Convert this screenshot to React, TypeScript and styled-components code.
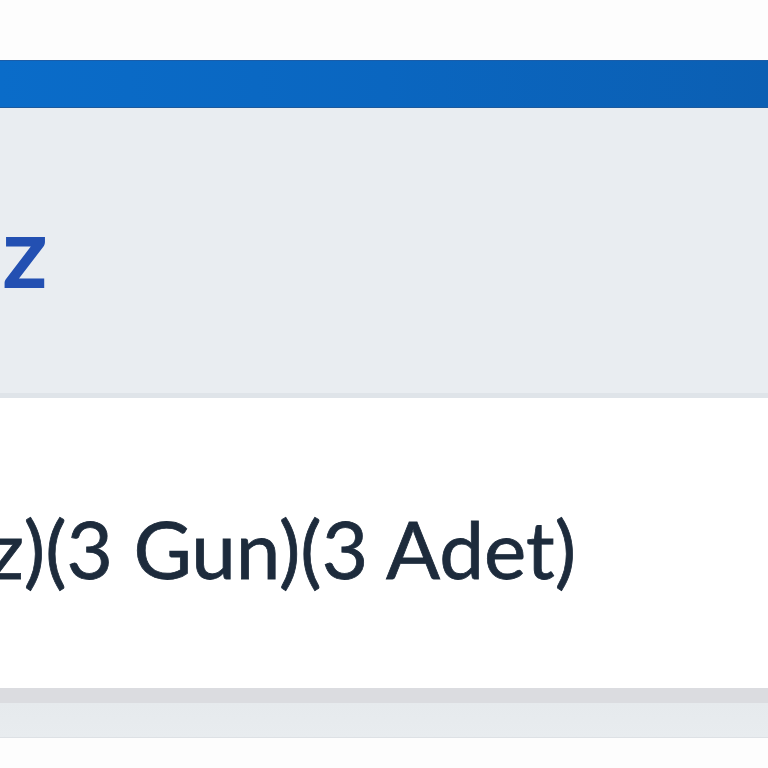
import React from "react";
import styled, { createGlobalStyle } from "styled-components";

const Global = createGlobalStyle`
  html, body { margin: 0; padding: 0; background: #fdfdfd; overflow: hidden; }
  #root { width: 768px; height: 768px; }
`;

const Page = styled.div`
  width: 768px;
  height: 768px;
  display: flex;
  flex-direction: column;
  font-family: Lato, "Open Sans", sans-serif;
  overflow: hidden;
`;

const TopSpace = styled.div`
  height: 60px;
  background: #fdfdfd;
`;

const BlueBar = styled.div`
  height: 48px;
  background: linear-gradient(90deg, #0a6cc9 0%, #0a66c0 50%, #0b5fb3 100%);
  border-top: 1px solid #1b5da8;
  border-bottom: 1px solid #1b5a9e;
  box-sizing: border-box;
`;

const HeadBand = styled.div`
  height: 290px;
  background: #e9edf1;
  border-bottom: 5px solid #dfe4e9;
  box-sizing: border-box;
  display: flex;
  align-items: center;
`;

const EndAnchor = styled.div<{ $w: number }>`
  width: ${(p) => p.$w}px;
  flex: none;
  display: flex;
  justify-content: flex-end;
`;

const Heading = styled.h1`
  margin: 0;
  white-space: nowrap;
  font-size: 100px;
  font-weight: 700;
  color: #2350b2;
  line-height: 1;
  transform: translateY(-2px);
`;

const Body = styled.div`
  height: 290px;
  background: #ffffff;
  display: flex;
  align-items: center;
`;

const Line = styled.p`
  margin: 0;
  white-space: nowrap;
  font-size: 80px;
  font-weight: 400;
  color: #1d2b3c;
  line-height: 1;
  transform: translateY(5px);
  -webkit-text-stroke: 0.8px #1d2b3c;
`;

const Footer = styled.div`
  height: 50px;
  background: linear-gradient(180deg, #dbdce0 0%, #dbdce0 30%, #e6eaed 31%, #e8ecef 100%);
  border-bottom: 1px solid #dde1e5;
  box-sizing: border-box;
`;

const Bottom = styled.div`
  flex: 1;
  background: #fdfdfd;
`;

export default function App() {
  return (
    <Page>
      <Global />
      <TopSpace />
      <BlueBar />
      <HeadBand>
        <EndAnchor $w={48}>
          <Heading>Sepetiniz</Heading>
        </EndAnchor>
      </HeadBand>
      <Body>
        <EndAnchor $w={576}>
          <Line>Kampanyasız)(3 Gun)(3 Adet)</Line>
        </EndAnchor>
      </Body>
      <Footer />
      <Bottom />
    </Page>
  );
}
